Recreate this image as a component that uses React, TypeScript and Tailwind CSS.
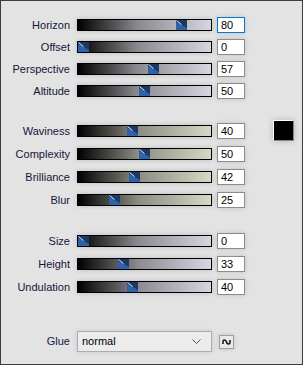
import React from "react";

type Row = { label: string; value: number };

const groupA: Row[] = [
  { label: "Horizon", value: 80 },
  { label: "Offset", value: 0 },
  { label: "Perspective", value: 57 },
  { label: "Altitude", value: 50 },
];

const groupB: Row[] = [
  { label: "Waviness", value: 40 },
  { label: "Complexity", value: 50 },
  { label: "Brilliance", value: 42 },
  { label: "Blur", value: 25 },
];

const groupC: Row[] = [
  { label: "Size", value: 0 },
  { label: "Height", value: 33 },
  { label: "Undulation", value: 40 },
];

function Thumb() {
  return (
    <svg width="11" height="10" viewBox="0 0 11 10" className="block">
      <rect width="11" height="10" fill="#1d3864" />
      <polygon points="0,2 0,10 11,10 11,8 4,4" fill="#2d63a8" />
      <line x1="0.5" y1="0.5" x2="5.5" y2="4.5" stroke="#e8eefa" strokeWidth="1" />
    </svg>
  );
}

function Slider({ value, warm }: { value: number; warm?: boolean }) {
  const left = Math.round((value / 100) * 122);
  return (
    <div
      className={`relative h-[12px] w-[135px] border border-black shadow-[0_0_5px_rgba(0,0,0,0.18)] ${
        warm
          ? "bg-[linear-gradient(to_right,#000000,#8c8c82_45%,#d6d8c4)]"
          : "bg-[linear-gradient(to_right,#000000,#8a8a90_45%,#d6d6e2)]"
      }`}
    >
      <div className="absolute top-0" style={{ left }}>
        <Thumb />
      </div>
    </div>
  );
}

function SliderRow({
  row,
  warm,
  focused,
  extra,
}: {
  row: Row;
  warm?: boolean;
  focused?: boolean;
  extra?: React.ReactNode;
}) {
  return (
    <div className="flex h-[16px] items-center">
      <span className="w-[70px] pr-px text-right text-[11px] leading-none text-[#15153a]">{row.label}</span>
      <div className="ml-[6px]">
        <Slider value={row.value} warm={warm} />
      </div>
      <div
        className={`ml-[5px] flex h-[16px] w-[28px] items-center bg-white pl-[3px] text-[11px] leading-none text-black shadow-[0_0_5px_rgba(0,0,0,0.15)] ${
          focused ? "border border-[#0078d7]" : "border border-[#8c8c8c]"
        }`}
      >
        {row.value}
      </div>
      {extra}
    </div>
  );
}

export default function App() {
  return (
    <div className="h-[365px] w-[303px] border border-[#3c3c3c] bg-[#e3e3e3] pt-4 font-['Liberation_Sans',Arial,sans-serif]">
      <div className="flex flex-col gap-[6px]">
        {groupA.map((r, i) => (
          <SliderRow key={r.label} row={r} focused={i === 0} />
        ))}
      </div>

      <div className="mt-[24px] flex flex-col gap-[7px]">
        {groupB.map((r, i) => (
          <SliderRow
            key={r.label}
            row={r}
            warm
            extra={
              i === 0 ? (
                <div className="ml-[28px] -mt-[2px] h-[21px] w-[21px] border-t border-l border-t-white border-l-white border-b border-r border-b-[#888] border-r-[#888] bg-black shadow-[0_0_6px_rgba(0,0,0,0.2)]" />
              ) : null
            }
          />
        ))}
      </div>

      <div className="mt-[25px] flex flex-col gap-[7px]">
        {groupC.map((r) => (
          <SliderRow key={r.label} row={r} />
        ))}
      </div>

      <div className="mt-[36px] flex items-center">
        <span className="w-[70px] pr-px text-right text-[11px] leading-none text-[#15153a]">Glue</span>
        <div className="ml-[6px] flex h-[21px] w-[135px] items-center justify-between border border-[#adadad] bg-[#ececec] pl-[4px] pr-[10px] text-[11px] text-black shadow-[0_0_5px_rgba(0,0,0,0.12)]">
          <span>normal</span>
          <svg width="9" height="5" viewBox="0 0 9 5">
            <polyline points="0.5,0.5 4.5,4.5 8.5,0.5" fill="none" stroke="#555" strokeWidth="1" />
          </svg>
        </div>
        <div className="ml-[7px] flex h-[14px] w-[15px] items-center justify-center border border-[#a0a0a0] bg-[#e9e9e9] shadow-[0_0_4px_rgba(0,0,0,0.15)]">
          <svg width="9" height="6" viewBox="0 0 9 6">
            <path
              d="M1 5 L1 2.5 Q1 1 2.5 1 Q4 1 4.5 3 Q5 5 6.5 5 Q8 5 8 3.5 L8 1"
              fill="none"
              stroke="#111"
              strokeWidth="1.5"
            />
          </svg>
        </div>
      </div>
    </div>
  );
}
